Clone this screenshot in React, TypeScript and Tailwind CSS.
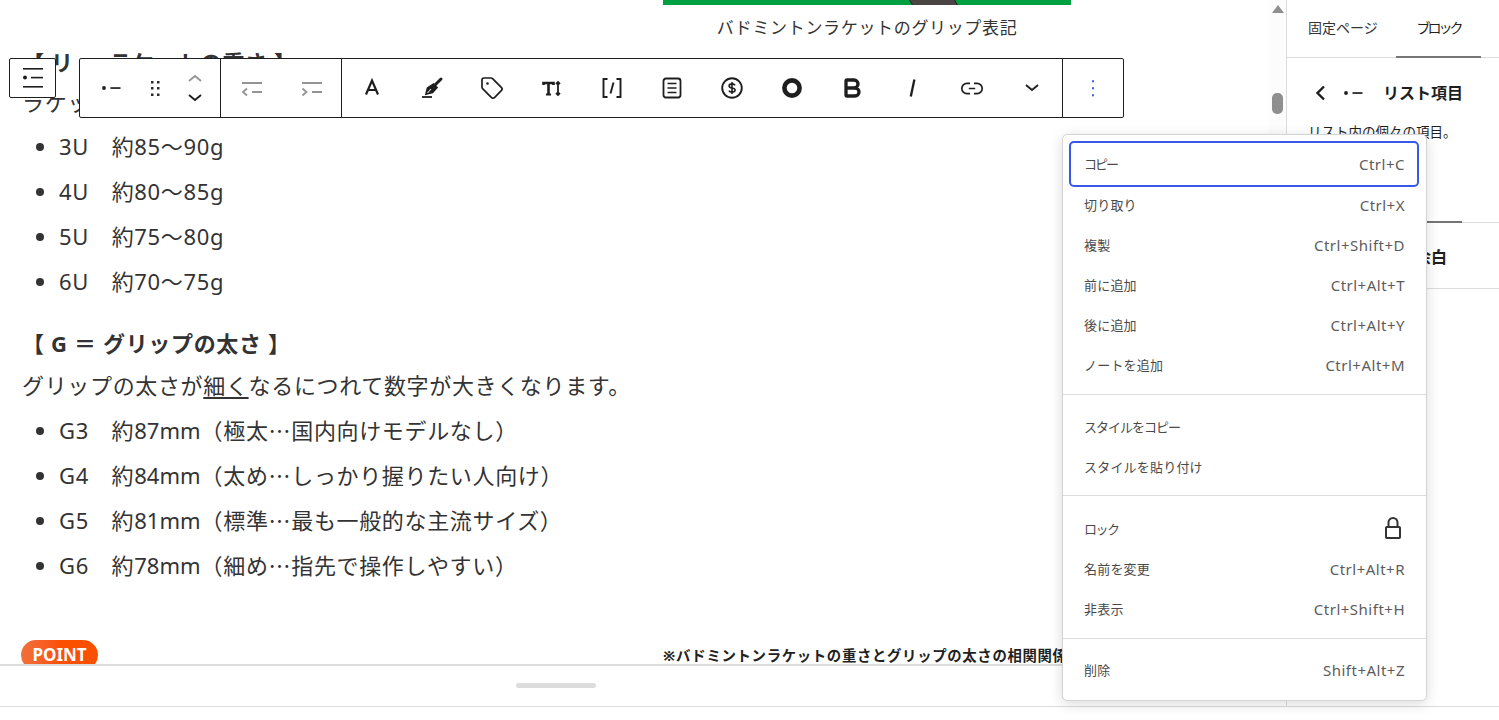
import React from "react";
import { Tag, Bold } from "lucide-react";

const I = ({ children, c = "#1e1e1e" }: { children: React.ReactNode; c?: string }) => (
  <svg width="24" height="24" viewBox="0 0 24 24" fill="none" stroke={c} strokeWidth="1.5">{children}</svg>
);

const Btn = ({ children, w = "w-[60px]" }: { children: React.ReactNode; w?: string }) => (
  <div className={`${w} h-full flex items-center justify-center shrink-0`}>{children}</div>
);

const Chev = ({ up, c }: { up?: boolean; c: string }) => (
  <svg width="18" height="10" viewBox="0 0 18 10" fill="none" stroke={c} strokeWidth="1.8">
    <path d={up ? "M3 8l6-5 6 5" : "M3 2l6 5 6-5"} />
  </svg>
);

const ListDash = ({ c = "#1e1e1e" }: { c?: string }) => (
  <svg width="24" height="24" viewBox="0 0 24 24" fill={c}>
    <circle cx="6" cy="12" r="1.9" />
    <rect x="12.5" y="11.2" width="10" height="1.7" />
  </svg>
);

const Toolbar = () => (
  <div className="absolute left-[79px] top-[58px] h-[60px] w-[1045px] flex bg-white border border-[#1e1e1e] rounded-[2px]">
    <div className="flex items-center border-r border-[#1e1e1e] w-[141px]">
      <Btn w="w-[59px]"><ListDash /></Btn>
      <Btn w="w-[32px]">
        <svg width="24" height="24" viewBox="0 0 24 24" fill="#2a2a2a">
          <path d="M8 5h2.5v2.5H8zM8 11h2.5v2.5H8zM8 17.5h2.5V20H8zM14 5h2.5v2.5H14zM14 11h2.5v2.5H14zM14 17.5h2.5V20H14z" />
        </svg>
      </Btn>
      <div className="w-[48px] flex flex-col items-center gap-[10px]">
        <Chev up c="#949494" />
        <Chev c="#1e1e1e" />
      </div>
    </div>
    <div className="flex items-center border-r border-[#1e1e1e] w-[121px]">
      <Btn>
        <I c="#949494"><path strokeWidth="1.8" d="M3 7h20M13 16h10M8 12.5L4 16l4 3.5" /></I>
      </Btn>
      <Btn>
        <I c="#949494"><path strokeWidth="1.8" d="M3 7h20M13 16h10M3.5 12.5L7.5 16l-4 3.5" /></I>
      </Btn>
    </div>
    <div className="flex items-center w-[721px] border-r border-[#1e1e1e]">
      <Btn>
        <I><path strokeWidth="2.2" d="M6 18.5L12 4.5l6 14M8 14h8" /></I>
      </Btn>
      <Btn>
        <I>
          <path strokeWidth="1.8" d="M2 21h10" />
          <path strokeWidth="3" strokeLinecap="round" d="M21 3l-6 6" />
          <path strokeWidth="1.7" fill="#1e1e1e" d="M13.5 8l3.5 3.5-4.5 5-6.5 1.5 1.5-6z" />
          <path stroke="#fff" strokeWidth="1" d="M7.5 17l3.5-4" />
        </I>
      </Btn>
      <Btn><Tag size={24} strokeWidth={1.7} color="#1e1e1e" /></Btn>
      <Btn>
        <I>
          <path strokeWidth="2.6" d="M3.5 9V7h10v2M8.5 7v11.5" />
          <path strokeWidth="2" d="M6 18.5h5" />
          <path strokeWidth="1.8" d="M18 6v13M16 8l2-2 2 2M16 17l2 2 2-2" />
        </I>
      </Btn>
      <Btn>
        <I><path strokeWidth="1.9" d="M7.5 3H3.5v18h4M16.5 3h4v18h-4M13.5 6.5l-3 11" /></I>
      </Btn>
      <Btn>
        <I>
          <rect x="3.5" y="2.5" width="17" height="19" rx="2.5" strokeWidth="1.8" />
          <path strokeWidth="1.7" d="M7.5 7.5h9M7.5 12h9M7.5 16.5h9" />
        </I>
      </Btn>
      <Btn>
        <I>
          <circle cx="12" cy="12" r="9.8" strokeWidth="1.9" />
          <path strokeWidth="1.6" d="M15 9.4c-.4-1-1.5-1.5-3-1.5-1.7 0-2.9.8-2.9 2 0 2.9 6 1.4 6 4.2 0 1.2-1.3 2-3.1 2-1.5 0-2.6-.5-3-1.5M12 6v12" />
        </I>
      </Btn>
      <Btn>
        <I><circle cx="12" cy="12" r="7.6" strokeWidth="4.6" /></I>
      </Btn>
      <Btn><Bold size={24} strokeWidth={3.3} color="#1e1e1e" /></Btn>
      <Btn>
        <I><path strokeWidth="2.3" d="M14.4 3.5L10.8 20.5" /></I>
      </Btn>
      <Btn>
        <I>
          <path strokeWidth="1.7" d="M10 7.3H7a5.2 5.2 0 0 0 0 10.4h3M14 7.3h3a5.2 5.2 0 0 1 0 10.4h-3M8.8 12.5h6.4" />
        </I>
      </Btn>
      <Btn>
        <svg width="18" height="10" viewBox="0 0 18 10" fill="none" stroke="#1e1e1e" strokeWidth="1.8"><path d="M3 2l6 5 6-5" /></svg>
      </Btn>
    </div>
    <Btn>
      <svg width="24" height="24" viewBox="0 0 24 24" fill="#3858e9">
        <rect x="11" y="4" width="2" height="2.4" rx="1" />
        <rect x="11" y="11" width="2" height="2.4" rx="1" />
        <rect x="11" y="18" width="2" height="2.4" rx="1" />
      </svg>
    </Btn>
  </div>
);

const ListViewBox = () => (
  <div className="absolute left-[9px] top-[58px] w-[47px] h-[40px] bg-white border border-[#1e1e1e] rounded-[2px] flex items-center justify-center">
    <svg width="24" height="24" viewBox="0 0 24 24" fill="#1e1e1e">
      <rect x="2" y="2" width="20" height="1.6" />
      <circle cx="4" cy="11.5" r="2" />
      <rect x="10" y="10.8" width="12" height="1.6" />
      <rect x="2" y="20" width="20" height="1.6" />
    </svg>
  </div>
);

const LockIcon = () => (
  <svg width="24" height="24" viewBox="0 0 24 24" fill="none" stroke="#333" strokeWidth="2">
    <rect x="5" y="10" width="14" height="11" rx="0.8" />
    <path d="M7.5 10V5.5a4.5 4.5 0 0 1 9 0V10" />
  </svg>
);

const Row = ({ l, r, sel, narrow }: { l: string; r?: React.ReactNode; sel?: boolean; narrow?: string }) => (
  <div
    className={
      sel
        ? "h-[46px] ml-[6px] mr-[7px] pl-[13px] pr-[12px] flex items-center justify-between border-2 border-[#3858e9] rounded-[5px]"
        : "h-[40px] mx-[5px] pl-[16px] pr-[16px] flex items-center justify-between"
    }
  >
    <span className={`pt-[2px] text-[13px] text-[#4a4a4a] ${narrow ?? "tracking-[0.2px]"}`}>{l}</span>
    {typeof r === "string" ? <span className="text-[15px] tracking-[0.5px] text-[#5c5c5c]">{r}</span> : r}
  </div>
);

const Menu = () => (
  <div className="absolute left-[1062px] top-[134px] w-[365px] h-[567px] bg-white border border-[#d4d4d4] rounded-[5px] shadow-[0_3px_14px_rgba(0,0,0,0.14)] text-[#444] flex flex-col">
    <div className="pt-[6px] pb-[9px] border-b border-[#dcdcdc]">
      <Row sel l="コピー" r="Ctrl+C" narrow="tracking-[-2px]" />
      <div className="-mt-[2px]">
        <Row l="切り取り" r="Ctrl+X" />
      </div>
      <Row l="複製" r="Ctrl+Shift+D" />
      <Row l="前に追加" r="Ctrl+Alt+T" />
      <Row l="後に追加" r="Ctrl+Alt+Y" />
      <Row l="ノートを追加" r="Ctrl+Alt+M" />
    </div>
    <div className="pt-[12px] pb-[8px] border-b border-[#dcdcdc]">
      <Row l="スタイルをコピー" narrow="tracking-[-1px]" />
      <Row l="スタイルを貼り付け" />
    </div>
    <div className="pt-[13px] pb-[9px] border-b border-[#dcdcdc]">
      <Row l="ロック" r={<LockIcon />} narrow="tracking-[-1.5px]" />
      <Row l="名前を変更" r="Ctrl+Alt+R" />
      <Row l="非表示" r="Ctrl+Shift+H" />
    </div>
    <div className="pt-[11px]">
      <Row l="削除" r="Shift+Alt+Z" />
    </div>
  </div>
);

const Li = ({ children }: { children: React.ReactNode }) => <li className="h-[45px] leading-[45px]">{children}</li>;
const Dots = () => <span className="font-['Noto_Sans_CJK_JP',sans-serif]">…</span>;
const Mm = ({ t }: { t: string }) => <span className="tracking-normal">{t}</span>;

const Content = () => (
  <div className="w-[1269px] text-[#333] text-[22px] tracking-[0.03em] pl-[22px]">
    <div className="ml-[641px] w-[408px]">
      <div className="h-[5px] bg-[#00a040] relative overflow-hidden">
        <svg className="absolute left-[245px] top-0" width="52" height="5" viewBox="0 0 52 5" fill="#4a4543" stroke="#222" strokeWidth="1">
          <path d="M1 -1L5 6H50L46 -1z" />
        </svg>
      </div>
      <div className="mt-[8px] leading-[30px] text-[17px] text-center">バドミントンラケットのグリップ表記</div>
    </div>
    <div className="mt-[4px] font-bold leading-[30px]">【 リ ＝ ラケットの重さ 】</div>
    <div className="mt-[10px] leading-[30px]">ラケットの重さが軽くなるにつれて数字が大きくなります。</div>
    <ul className="mt-[7px] pl-[37px] list-disc">
      <Li>3U　約85～90g</Li>
      <Li>4U　約80～85g</Li>
      <Li>5U　約75～80g</Li>
      <Li>6U　約70～75g</Li>
    </ul>
    <div className="mt-[24px] font-bold leading-[30px]">【 G ＝ グリップの太さ 】</div>
    <div className="mt-[12px] leading-[30px]">
      グリップの太さが<span className="underline underline-offset-[3px]">細く</span>なるにつれて数字が大きくなります。
    </div>
    <ul className="mt-[7px] pl-[37px] list-disc">
      <Li>G3　約<Mm t="87mm" />（極太<Dots />国内向けモデルなし）</Li>
      <Li>G4　約<Mm t="84mm" />（太め<Dots />しっかり握りたい人向け）</Li>
      <Li>G5　約<Mm t="81mm" />（標準<Dots />最も一般的な主流サイズ）</Li>
      <Li>G6　約<Mm t="78mm" />（細め<Dots />指先で操作しやすい）</Li>
    </ul>
    <div className="mt-[53px] flex items-start -ml-[1px]">
      <div className="w-[77px] h-[30px] rounded-[15px] bg-gradient-to-r from-[#f0703a] via-[#fb5000] to-[#fb5000] text-white text-[17px] tracking-normal font-bold leading-[30px] text-center">
        POINT
      </div>
      <div className="ml-[565px] mt-[6px] text-[14.4px] font-bold text-[#222] leading-[20px] whitespace-nowrap">
        ※バドミントンラケットの重さとグリップの太さの相関関係
      </div>
    </div>
  </div>
);

const Sidebar = () => (
  <div className="flex-1 border-l border-[#dcdcdc] text-[#1e1e1e]">
    <div className="h-[58px] flex border-b border-[#dcdcdc] text-[14px]">
      <div className="w-[109px] pl-[21px] leading-[56px] text-[#333]">固定ページ</div>
      <div className="w-[85px] h-[58px] border-b-2 border-[#757575] text-center leading-[56px] tracking-[-3px]">ブロック</div>
    </div>
    <div className="h-[165px] border-b border-[#dcdcdc] relative">
      <div className="h-[70px] pl-[25px] flex items-center gap-[8px]">
        <svg width="20" height="24" viewBox="0 0 20 24" fill="none" stroke="#1e1e1e" strokeWidth="2.4"><path d="M12 5.5l-6.5 6.5 6.5 6.5" /></svg>
        <ListDash />
        <span className="ml-[11px] text-[16px] font-bold">リスト項目</span>
      </div>
      <div className="pl-[21px] text-[13.5px] leading-[20px] -mt-[6px]">リスト内の個々の項目。</div>
      <div className="absolute left-0 bottom-[-1px] w-[175px] h-[2px] bg-[#757575]" />
    </div>
    <div className="h-[66px] border-b border-[#dcdcdc] pl-[128px] pt-[2px] flex items-center text-[16px] font-bold">余白</div>
  </div>
);

export default function App() {
  return (
    <div className="relative w-[1499px] h-[720px] overflow-hidden bg-white flex flex-col font-['Noto_Sans','Noto_Sans_CJK_JP',sans-serif]">
      <div className="h-[707px] flex border-b border-[#dcdcdc]">
        <div className="w-[1286px] flex flex-col">
          <div className="h-[664px] flex overflow-hidden">
            <Content />
            <div className="w-[17px] bg-[#fcfcfc] relative flex flex-col items-center">
              <svg className="mt-[5px]" width="12" height="8" viewBox="0 0 12 8" fill="#8f8f8f"><path d="M6 0l6 8H0z" /></svg>
              <div className="mt-[80px] w-[11px] h-[21px] rounded-[5px] bg-[#8f8f8f]" />
            </div>
          </div>
          <div className="flex-1 border-t-2 border-[#dcdcdc] flex justify-start pl-[516px] pt-[17px]">
            <div className="w-[80px] h-[5px] rounded-[3px] bg-[#dcdcdc]" />
          </div>
        </div>
        <Sidebar />
      </div>
      <ListViewBox />
      <Toolbar />
      <Menu />
    </div>
  );
}
